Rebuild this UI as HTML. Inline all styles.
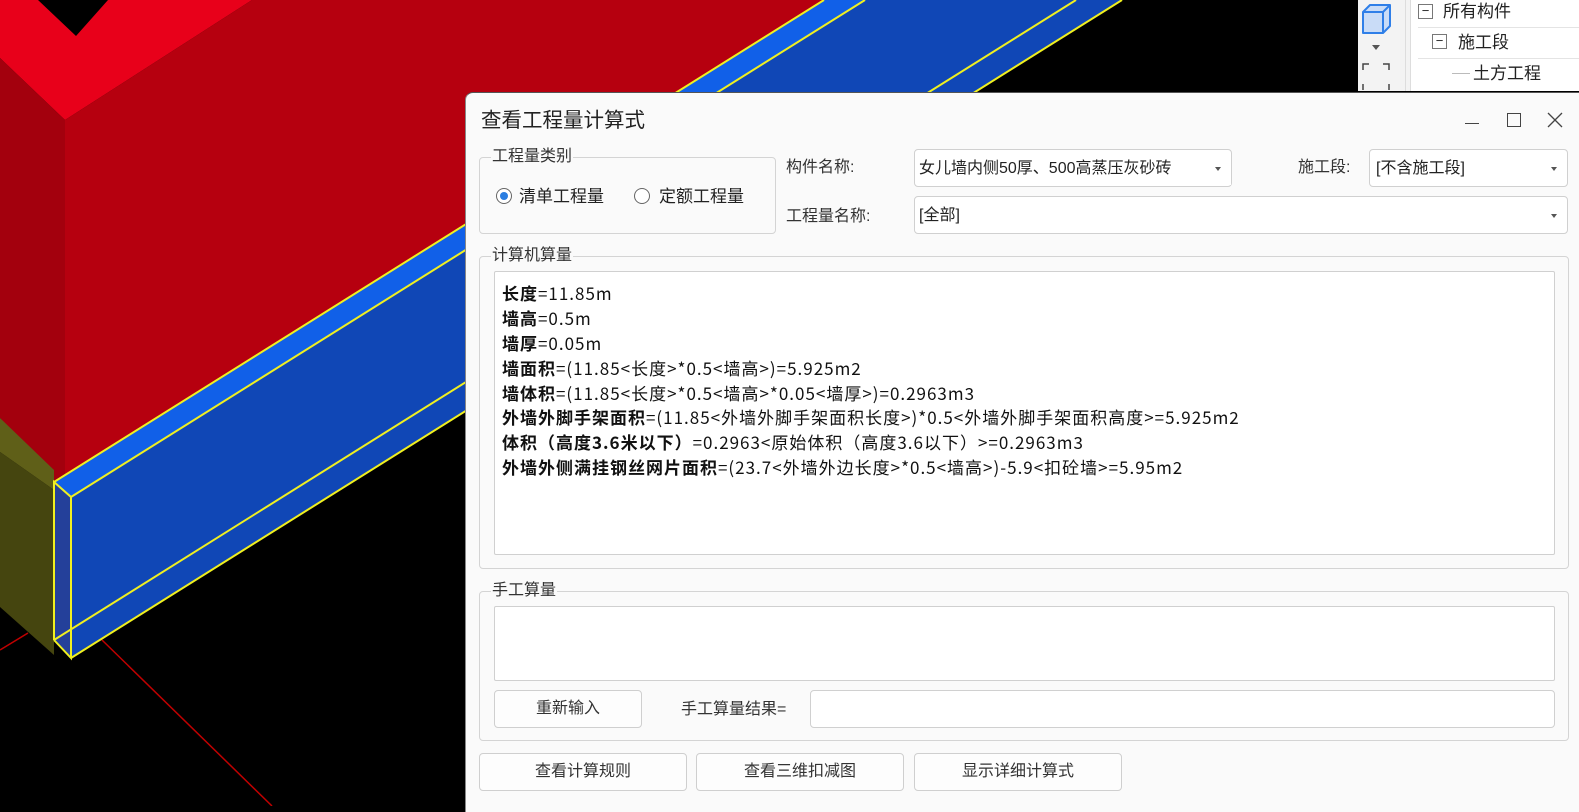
<!DOCTYPE html>
<html><head><meta charset="utf-8"><style>
*{margin:0;padding:0;box-sizing:border-box}
body{width:1579px;height:806px;overflow:hidden;background:#000;position:relative;font-family:"Liberation Sans","Noto Sans CJK SC",sans-serif;color:#222}
.a{position:absolute}
.dlg{position:absolute;left:465px;top:92px;width:1120px;height:720px;background:#fafafa;border-top-left-radius:8px;border-top:1px solid #555;border-left:1px solid #888}
.t{position:absolute;font-size:16px;white-space:nowrap;line-height:20px}
.grp{position:absolute;border:1px solid #d4d4d4;border-radius:4px}
.gl{position:absolute;background:#fafafa;font-size:16px;line-height:20px;padding:0 1px;color:#333}
.box{position:absolute;background:#fff;border:1px solid #d0d0d0;border-radius:4px}
.btn{position:absolute;background:#fdfdfd;border:1px solid #cfcfcf;border-radius:4px;font-size:16px;text-align:center;color:#333}
.arr{position:absolute;width:0;height:0;border-left:3px solid transparent;border-right:3px solid transparent;border-top:4px solid #555}
.calc div{height:24.9px;line-height:24.9px;font-size:17px;letter-spacing:1px;color:#111;white-space:nowrap;font-family:"Noto Sans CJK SC",sans-serif}
b{font-weight:bold}
</style></head><body>
<svg class="a" style="left:0;top:0" width="1579" height="806">
<polygon points="0,0 38,0 76,36 108,0 252,0 65,120 0,58" fill="#e8001a"/>
<polygon points="65,120 252,0 824,0 54,482 65,476" fill="#b6000f"/>
<polygon points="0,58 65,120 65,476 54,482 0,418" fill="#a3000d"/>
<polygon points="0,418 54,470 54,490 0,452" fill="#5f5f18"/>
<polygon points="0,452 54,490 54,655 0,607" fill="#45450f"/>
<polygon points="54,482 824,0 865,0 71,497" fill="#1160e8"/>
<polygon points="71,497 865,0 1122,0 71,658" fill="#1047b6"/>
<polygon points="54,482 71,497 71,658 54,640" fill="#24409a"/>
<g stroke="#f0f020" stroke-width="2" fill="none">
<line x1="54" y1="482" x2="824" y2="0"/>
<line x1="71" y1="497" x2="865" y2="0"/>
<line x1="54" y1="640" x2="1076" y2="0"/>
<line x1="71" y1="658" x2="1122" y2="0"/>
<polyline points="54,640 54,482 71,497 71,658 54,640"/>
</g>
<line x1="102" y1="640" x2="272" y2="806" stroke="#c00000" stroke-width="1.5"/>
<line x1="0" y1="650" x2="28" y2="633" stroke="#c00000" stroke-width="1.5"/>
</svg>
<div class="a" style="left:1358px;top:0;width:221px;height:91px;background:#f3f3f3"></div>
<div class="a" style="left:1410px;top:0;width:169px;height:91px;background:#fff;border-left:1px solid #ddd"></div>
<div class="a" style="left:1405px;top:0;width:1px;height:91px;background:#ddd"></div>
<svg class="a" style="left:1358px;top:0" width="50" height="91">
<path d="M5,12 L12,5 L32,5 L32,26 L25,33 L5,33 Z" fill="#c9dcf7" stroke="#2f7fe8" stroke-width="2" stroke-linejoin="round"/>
<path d="M5,12 L25,12 L25,33 M25,12 L32,5" fill="none" stroke="#2f7fe8" stroke-width="2"/>
<path d="M14,45 L22,45 L18,50 Z" fill="#555"/>
<path d="M5,70 V64 H11 M25,64 H31 V70 M31,84 V90 M5,84 V90" fill="none" stroke="#444" stroke-width="1.5"/>
</svg>
<div class="a" style="left:1418px;top:27px;width:161px;height:1px;background:#e4e4e4"></div>
<div class="a" style="left:1418px;top:58px;width:161px;height:1px;background:#e4e4e4"></div>
<div class="a" style="left:1418px;top:4px;width:15px;height:15px;border:1px solid #777;font-size:13px;line-height:12px;text-align:center">−</div>
<div class="t" style="left:1443px;top:2px;font-size:17px">所有构件</div>
<div class="a" style="left:1432px;top:34px;width:15px;height:15px;border:1px solid #777;font-size:13px;line-height:12px;text-align:center">−</div>
<div class="t" style="left:1458px;top:33px;font-size:17px">施工段</div>
<div class="a" style="left:1452px;top:73px;width:18px;height:1px;background:#bbb"></div>
<div class="t" style="left:1473px;top:64px;font-size:17px">土方工程</div>

<div class="dlg">
<div class="t" style="left:15px;top:16px;font-size:20.5px;line-height:24px;color:#222">查看工程量计算式</div>
<div class="a" style="left:999px;top:30px;width:14px;height:1px;background:#444"></div>
<div class="a" style="left:1041px;top:20px;width:14px;height:14px;border:1.3px solid #444"></div>
<svg class="a" style="left:1081px;top:19px" width="16" height="16"><path d="M1,1 L15,15 M15,1 L1,15" stroke="#444" stroke-width="1.3"/></svg>

<div class="grp" style="left:13px;top:64px;width:297px;height:77px"></div>
<div class="gl" style="left:25px;top:54px">工程量类别</div>
<div class="a" style="left:30px;top:95px;width:16px;height:16px;border:1px solid #666;border-radius:50%;background:#fff"></div>
<div class="a" style="left:34px;top:99px;width:8px;height:8px;border-radius:50%;background:#2a7de1"></div>
<div class="t" style="left:53px;top:94px;font-size:17px">清单工程量</div>
<div class="a" style="left:168px;top:95px;width:16px;height:16px;border:1px solid #666;border-radius:50%;background:#fff"></div>
<div class="t" style="left:193px;top:94px;font-size:17px">定额工程量</div>

<div class="t" style="left:320px;top:65px;color:#333">构件名称:</div>
<div class="box" style="left:448px;top:56px;width:318px;height:38px"></div>
<div class="t" style="left:453px;top:66px">女儿墙内侧50厚、500高蒸压灰砂砖</div>
<div class="a" style="left:747px;top:74px;width:18px;height:18px;background:#fff"></div>
<div class="arr" style="left:749px;top:74px"></div>
<div class="t" style="left:832px;top:65px;color:#333">施工段:</div>
<div class="box" style="left:903px;top:56px;width:199px;height:38px"></div>
<div class="t" style="left:910px;top:66px">[不含施工段]</div>
<div class="arr" style="left:1085px;top:74px"></div>
<div class="t" style="left:320px;top:114px;color:#333">工程量名称:</div>
<div class="box" style="left:448px;top:103px;width:654px;height:38px"></div>
<div class="t" style="left:453px;top:113px">[全部]</div>
<div class="arr" style="left:1085px;top:121px"></div>

<div class="grp" style="left:13px;top:163px;width:1090px;height:313px"></div>
<div class="gl" style="left:25px;top:153px">计算机算量</div>
<div class="box calc" style="left:28px;top:178px;width:1061px;height:284px;border-radius:2px;padding:9px 0 0 7px">
<div><b>长度</b>=11.85m</div>
<div><b>墙高</b>=0.5m</div>
<div><b>墙厚</b>=0.05m</div>
<div><b>墙面积</b>=(11.85&lt;长度&gt;*0.5&lt;墙高&gt;)=5.925m2</div>
<div><b>墙体积</b>=(11.85&lt;长度&gt;*0.5&lt;墙高&gt;*0.05&lt;墙厚&gt;)=0.2963m3</div>
<div><b>外墙外脚手架面积</b>=(11.85&lt;外墙外脚手架面积长度&gt;)*0.5&lt;外墙外脚手架面积高度&gt;=5.925m2</div>
<div><b>体积（高度3.6米以下）</b>=0.2963&lt;原始体积（高度3.6以下）&gt;=0.2963m3</div>
<div><b>外墙外侧满挂钢丝网片面积</b>=(23.7&lt;外墙外边长度&gt;*0.5&lt;墙高&gt;)-5.9&lt;扣砼墙&gt;=5.95m2</div>
</div>

<div class="grp" style="left:13px;top:498px;width:1090px;height:150px"></div>
<div class="gl" style="left:25px;top:488px">手工算量</div>
<div class="box" style="left:28px;top:513px;width:1061px;height:75px;border-radius:2px"></div>
<div class="btn" style="left:28px;top:597px;width:148px;height:38px;line-height:36px">重新输入</div>
<div class="t" style="left:215px;top:607px;color:#333">手工算量结果=</div>
<div class="box" style="left:344px;top:597px;width:745px;height:38px"></div>

<div class="btn" style="left:13px;top:660px;width:208px;height:38px;line-height:36px">查看计算规则</div>
<div class="btn" style="left:230px;top:660px;width:208px;height:38px;line-height:36px">查看三维扣减图</div>
<div class="btn" style="left:448px;top:660px;width:208px;height:38px;line-height:36px">显示详细计算式</div>
</div>
</body></html>
